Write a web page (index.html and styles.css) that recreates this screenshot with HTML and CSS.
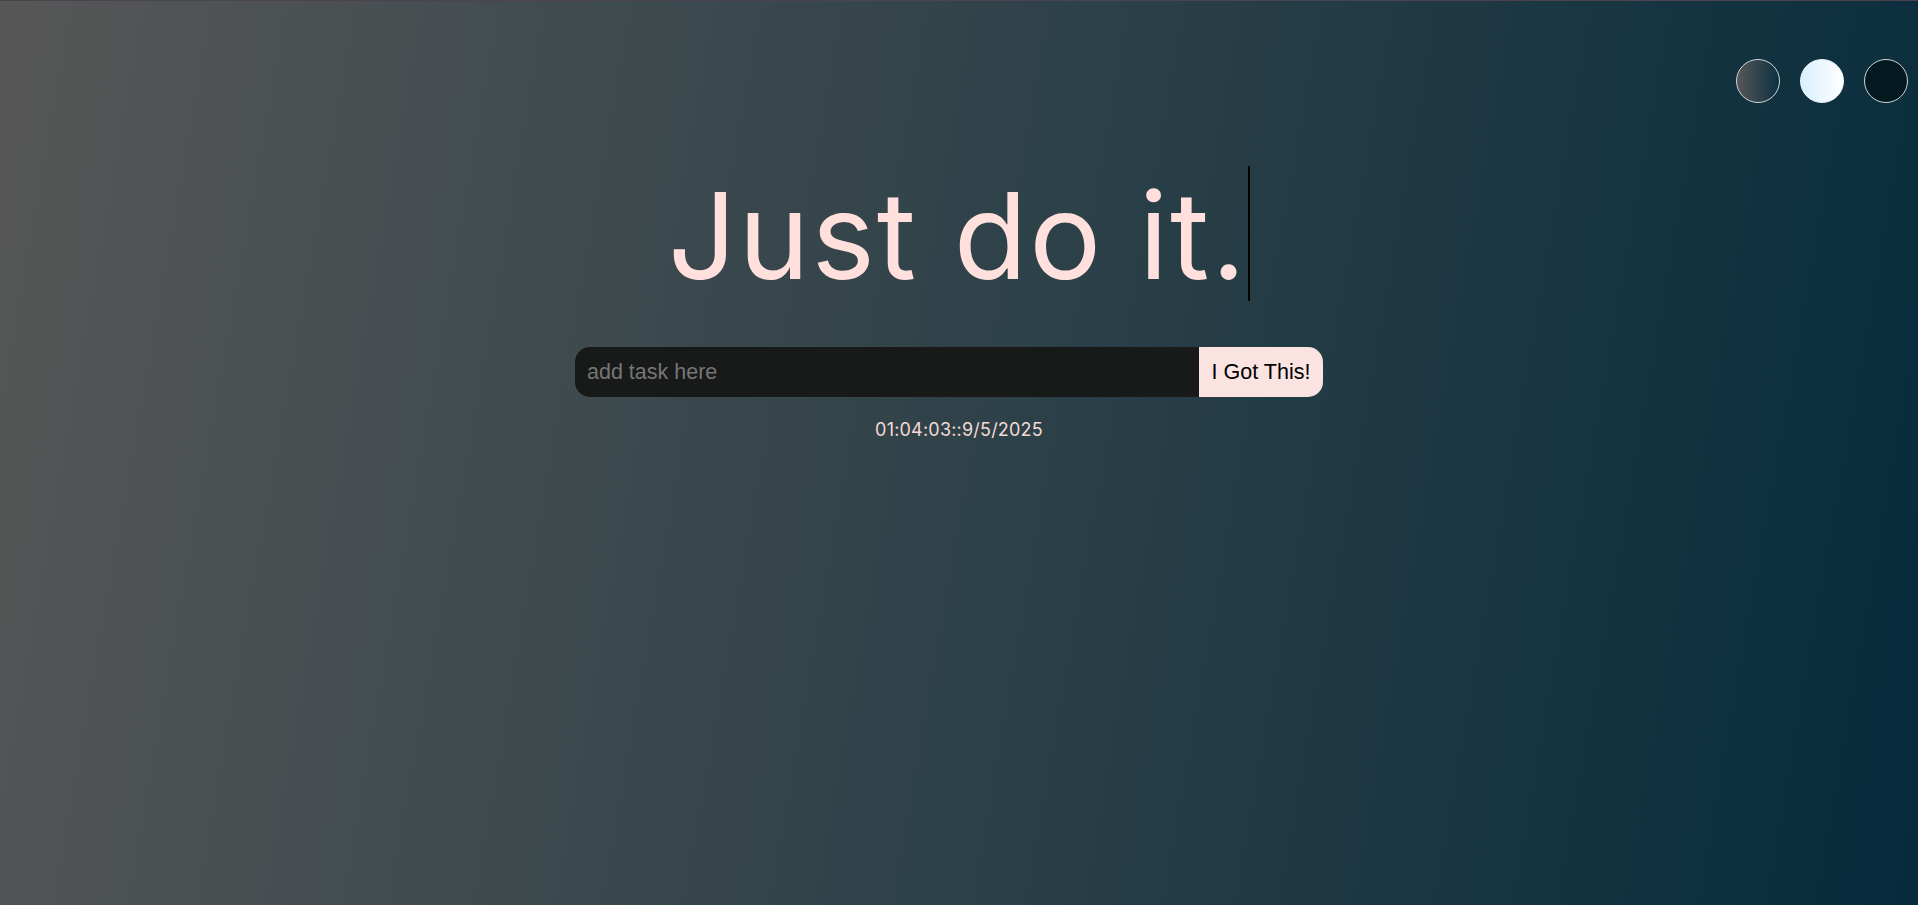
FILE: index.html
```html
<!DOCTYPE html>
<html lang="en">
<head>
<meta charset="utf-8">
<title>Just do it.</title>
<link rel="stylesheet" href="styles.css">
</head>
<body>
<main class="page">
  <div class="themes">
    <button class="theme theme-standard" aria-label="standard theme"></button>
    <button class="theme theme-light" aria-label="light theme"></button>
    <button class="theme theme-darker" aria-label="darker theme"></button>
  </div>
  <h1 class="title"><span class="typed">Just do it.</span></h1>
  <form class="task-form">
    <input class="task-input" type="text" placeholder="add task here">
    <button class="task-button" type="button">I Got This!</button>
  </form>
  <p class="clock">01:04:03::9/5/2025</p>
</main>
</body>
</html>
```
FILE: styles.css
```css
* { box-sizing: border-box; }
html, body { margin: 0; height: 100%; }
body {
  background: linear-gradient(100deg, #575757 0%, #2f4249 50%, #062b3c 100%);
  border-top: 1px solid #4b4450;
  font-family: Inter, "Liberation Sans", sans-serif;
  overflow: hidden;
}
.page {
  display: flex;
  flex-direction: column;
  align-items: center;
  min-height: 100%;
}
.themes {
  align-self: stretch;
  display: flex;
  justify-content: flex-end;
  gap: 20px;
  padding: 58px 10px 0 0;
}
.theme {
  width: 44px;
  height: 44px;
  border-radius: 50%;
  border: 1px solid #d0d4d6;
  padding: 0;
  cursor: pointer;
}
.theme-standard { background: linear-gradient(to right, #575757, #0d3142); }
.theme-light { background: linear-gradient(to right, #d9efff, #ffffff); border-color: #eef6fb; }
.theme-darker { background: #01191f; }
.title {
  margin: 63px 0 0;
  font-weight: 400;
  font-size: 120px;
  line-height: 130px;
  letter-spacing: 2px;
  color: #ffe0dc;
}
.typed {
  display: inline-block;
  padding: 5px 0 0 0;
  border-right: 2px solid #000;
}
.task-form {
  display: flex;
  width: 748px;
  height: 50px;
  margin: 46px 20px 0 0;
}
.task-input {
  flex: 1;
  border: none;
  outline: none;
  background: #181a19;
  border-radius: 15px 0 0 15px;
  padding: 0 12px;
  font-family: "Liberation Sans", Arial, sans-serif;
  font-size: 21.5px;
  color: #ddd;
}
.task-input::placeholder { color: #767676; }
.task-button {
  width: 124px;
  border: none;
  background: #fae3e1;
  border-radius: 0 15px 15px 0;
  font-family: "Liberation Sans", Arial, sans-serif;
  font-size: 21.5px;
  color: #000;
  padding: 0;
  cursor: pointer;
}
.clock {
  margin: 22px 0 0;
  font-size: 18px;
  line-height: 22px;
  letter-spacing: 0.2px;
  color: #f3dad5;
}
```
